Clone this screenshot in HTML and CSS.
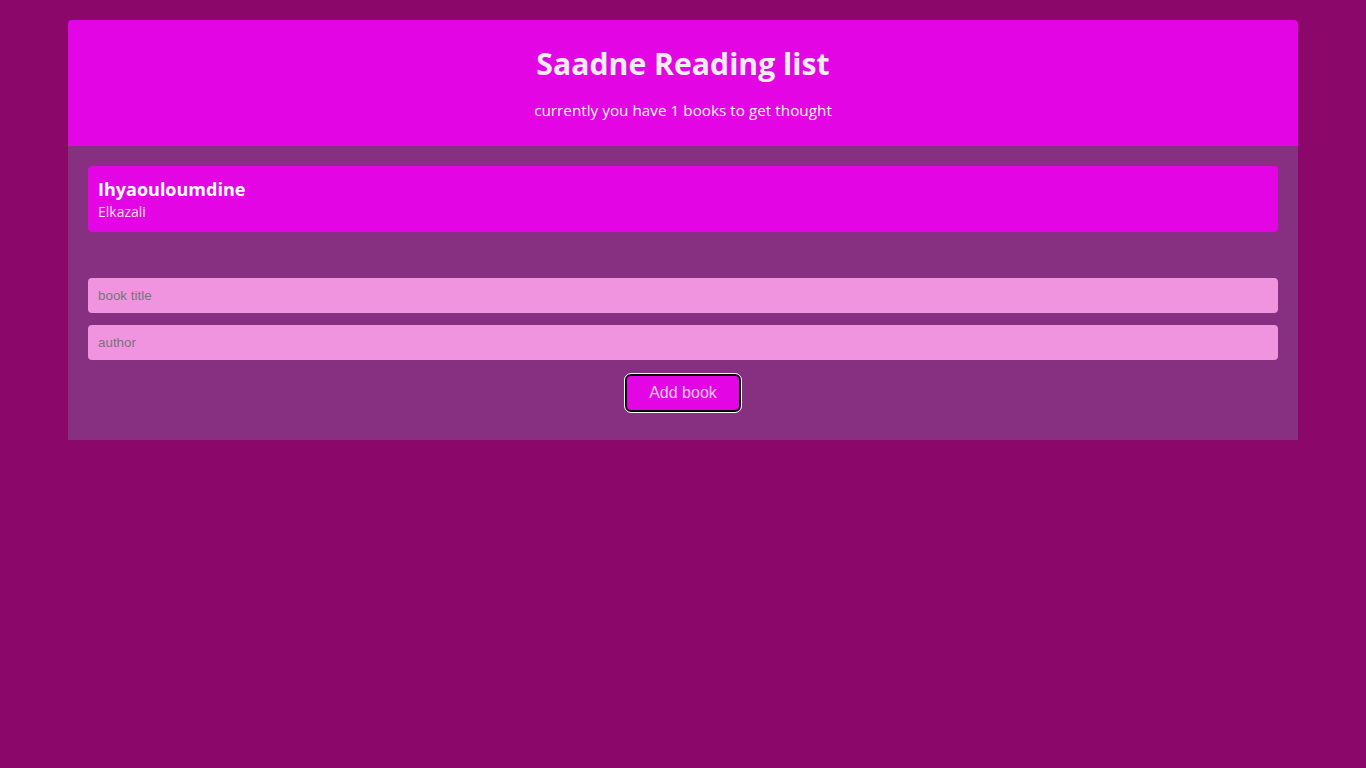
FILE: index.html
```html
<!DOCTYPE html>
<html lang="en">
<head>
<meta charset="utf-8">
<title>Reading list</title>
<link rel="stylesheet" href="styles.css">
</head>
<body>
<div class="app">
  <header class="navbar">
    <h1 class="title">Saadne Reading list</h1>
    <p class="subtitle">currently you have 1 books to get thought</p>
  </header>
  <main class="content">
    <ul class="book-list">
      <li class="book">
        <div class="book-title">Ihyaouloumdine</div>
        <div class="book-author">Elkazali</div>
      </li>
    </ul>
    <form class="book-form">
      <input class="field" type="text" placeholder="book title">
      <input class="field" type="text" placeholder="author">
      <button class="submit" type="button">Add book</button>
    </form>
  </main>
</div>
</body>
</html>
```
FILE: styles.css
```css
html, body {
  margin: 0;
  padding: 0;
}
body {
  background: #8b086a;
  font-family: "Open Sans", "Noto Sans", sans-serif;
  color: #eee;
}
.app {
  width: 1230px;
  margin: 20px auto 0;
}
.navbar {
  background: #e305e3;
  border-radius: 4px 4px 0 0;
  padding: 22px 20px 26px;
  text-align: center;
}
.title {
  margin: 0;
  font-size: 30.2px;
  font-weight: 700;
  line-height: 44px;
  color: #eeeeee;
}
.subtitle {
  margin: 14px 0 0;
  font-size: 15.3px;
  line-height: 20px;
  color: #f6f6f6;
}
.content {
  background: #872f80;
  padding: 20px 20px 28px;
}
.book-list {
  list-style: none;
  margin: 0;
  padding: 0;
}
.book {
  background: #e305e3;
  border-radius: 4px;
  padding: 12px 10px 10px;
}
.book-title {
  font-size: 18px;
  font-weight: 700;
  color: #ffffff;
  line-height: 22px;
}
.book-author {
  margin-top: 2px;
  font-size: 14px;
  color: #f0e0f0;
  line-height: 20px;
}
.book-form {
  margin-top: 46px;
  display: flex;
  flex-direction: column;
  align-items: center;
  gap: 12px;
}
.field {
  box-sizing: border-box;
  width: 100%;
  height: 35px;
  border: 0;
  border-radius: 4px;
  background: #f194e0;
  padding: 0 10px;
  font-family: "Liberation Sans", Arial, sans-serif;
  font-size: 13.4px;
  color: #333;
  outline: none;
}
.field::placeholder {
  color: #75757a;
}
.submit {
  margin-top: 2px;
  box-sizing: border-box;
  width: 116px;
  height: 38px;
  background: #e305e3;
  border: 2px solid #000;
  outline: 1px solid #fff;
  outline-offset: 0;
  border-radius: 6px;
  font-family: "Liberation Sans", Arial, sans-serif;
  font-size: 16px;
  color: #f4c8f4;
  cursor: pointer;
}
```
